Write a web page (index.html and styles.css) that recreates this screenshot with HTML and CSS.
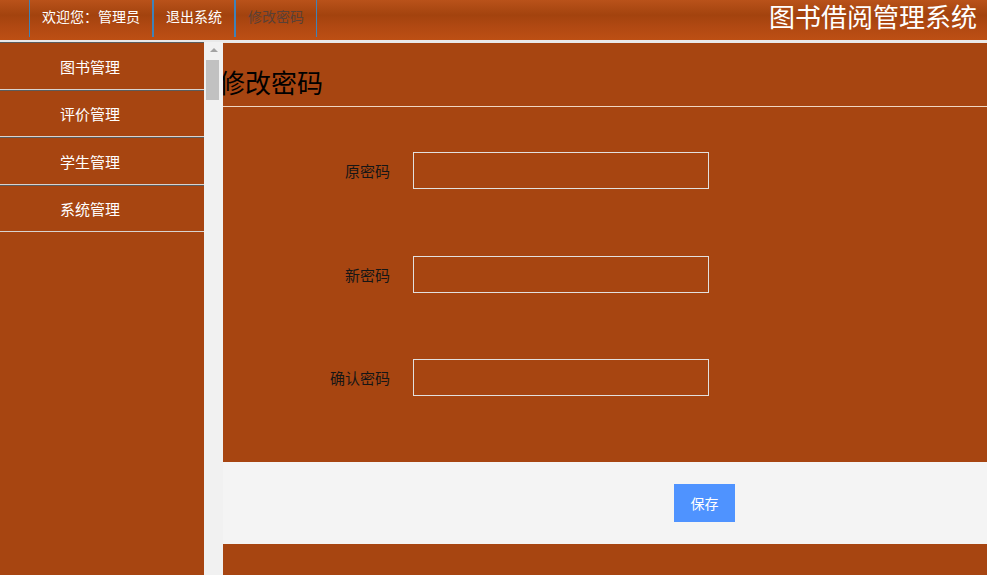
FILE: index.html
```html
<!DOCTYPE html>
<html lang="zh-CN">
<head>
<meta charset="utf-8">
<title>图书借阅管理系统</title>
<link rel="stylesheet" href="styles.css">
</head>
<body>
<header class="topbar">
  <ul class="nav">
    <li class="nav-item">欢迎您：管理员</li>
    <li class="nav-item">退出系统</li>
    <li class="nav-item nav-muted">修改密码</li>
  </ul>
  <h1 class="brand">图书借阅管理系统</h1>
</header>
<div class="main">
  <aside class="sidebar">
    <ul class="menu">
      <li class="menu-item">图书管理</li>
      <li class="menu-item">评价管理</li>
      <li class="menu-item">学生管理</li>
      <li class="menu-item">系统管理</li>
    </ul>
  </aside>
  <div class="scrollbar">
    <div class="scroll-arrow"></div>
    <div class="scroll-thumb"></div>
  </div>
  <section class="content">
    <h2 class="page-title">修改密码</h2>
    <form class="form">
      <div class="row">
        <label class="label">原密码</label>
        <input class="field" type="password">
      </div>
      <div class="row">
        <label class="label">新密码</label>
        <input class="field" type="password">
      </div>
      <div class="row">
        <label class="label">确认密码</label>
        <input class="field" type="password">
      </div>
    </form>
    <div class="actions">
      <button class="btn" type="button">保存</button>
    </div>
  </section>
</div>
</body>
</html>
```
FILE: styles.css
```css
* { box-sizing: border-box; }
html, body { margin: 0; padding: 0; height: 100%; }
body {
  background: #e9e9e9;
  font-family: "Noto Sans CJK SC", "Microsoft YaHei", "Liberation Sans", sans-serif;
  font-size: 14px;
  overflow: hidden;
}
.topbar {
  height: 40px;
  display: flex;
  justify-content: space-between;
  background: linear-gradient(to bottom, #b9521a 0%, #a3430e 38%, #b04812 65%, #bd4f14 100%);
}
.nav {
  list-style: none;
  margin: 0;
  padding: 0 0 0 29px;
  display: flex;
}
.nav-item {
  height: 37px;
  line-height: 32px;
  padding: 0 12px;
  color: #fff;
  border-left: 1px solid #3f82b8;
  border-right: 1px solid #3f82b8;
}
.nav-muted { color: #5a4036; }
.brand {
  margin: 0;
  padding: 0 10px 0 0;
  font-size: 26px;
  font-weight: normal;
  line-height: 32px;
  height: 38px;
  white-space: nowrap;
  color: #fff;
}
.main {
  display: flex;
  height: calc(100% - 42px);
  margin-top: 2px;
}
.sidebar {
  width: 204px;
  background: #a74511;
}
.menu { list-style: none; margin: 0; padding: 0; }
.menu-item {
  height: 47px;
  line-height: 46px;
  padding-left: 60px;
  font-size: 15px;
  color: #fff;
  border-top: 1px solid #5c5c5c;
  border-bottom: 1px solid #d9d3cf;
}
.menu-item:nth-child(odd) { height: 48px; line-height: 47px; }
.scrollbar {
  width: 19px;
  background: #f1f1f1;
  display: flex;
  flex-direction: column;
  align-items: flex-start;
  padding-left: 2px;
}
.scroll-arrow {
  width: 0; height: 0;
  margin: 6px 0 0 4px;
  border-left: 4px solid transparent;
  border-right: 4px solid transparent;
  border-bottom: 4px solid #a3a3a3;
}
.scroll-thumb {
  margin-top: 8px;
  width: 13px;
  height: 40px;
  background: #c1c1c1;
}
.content {
  flex: 1;
  margin-top: 1px;
  background: #a74511;
  overflow: hidden;
  display: flex;
  flex-direction: column;
}
.page-title {
  flex: none;
  box-sizing: content-box;
  margin: 0 0 0 -4px;
  height: 43px;
  padding-top: 20px;
  font-size: 26px;
  line-height: 38px;
  font-weight: normal;
  color: #000;
  border-bottom: 1px solid #f0d6c2;
}
.form {
  padding: 45px 0 66px;
  display: flex;
  flex-direction: column;
  gap: 66.5px;
}
.row {
  display: flex;
  align-items: center;
  height: 37px;
}
.label {
  width: 167px;
  text-align: right;
  font-size: 15px;
  color: #161616;
}
.field {
  margin-left: 23px;
  width: 296px;
  height: 37px;
  background: transparent;
  border: 1px solid #e3e0de;
  outline: none;
}
.actions {
  background: #f4f4f4;
  height: 82px;
  padding: 22px 0 0 451px;
}
.btn {
  width: 61px;
  height: 38px;
  background: #4f93ff;
  color: #fff;
  border: none;
  font-family: inherit;
  font-size: 14px;
  padding: 0;
}
```
